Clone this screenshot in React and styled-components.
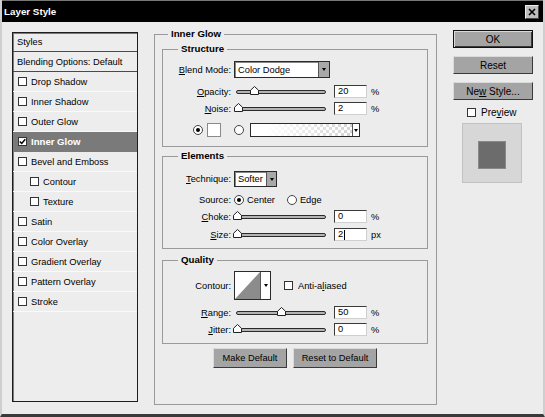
import React from 'react';
import styled, { createGlobalStyle } from 'styled-components';

const Global = createGlobalStyle`
  html, body { margin: 0; padding: 0; background: #ececec; }
  body { font-family: "Liberation Sans", Arial, sans-serif; font-size: 9.3px; color: #000; }
  * { box-sizing: border-box; }
`;

const Window = styled.div`
  width: 545px;
  height: 417px;
  background: #ececec;
  display: flex;
  flex-direction: column;
  border-left: 2px solid #cfcfcf;
  border-right: 2px solid #cfcfcf;
  border-bottom: 3px solid #3a3a3a;
  overflow: hidden;
`;

const TitleBar = styled.div`
  height: 22px;
  flex-shrink: 0;
  background: #000;
  color: #fff;
  font-weight: bold;
  font-size: 9.8px;
  display: flex;
  align-items: center;
  justify-content: space-between;
  padding: 0 4px 0 2px;
  border-top: 1px solid #777;
`;

const CloseBtn = styled.div`
  width: 14px;
  height: 14px;
  background: #bdbdbd;
  border: 1px solid;
  border-color: #eee #444 #444 #eee;
  display: flex;
  align-items: center;
  justify-content: center;
`;

const Body = styled.div`
  display: flex;
  align-items: flex-start;
  padding: 6px 10px 0 10px;
`;

const ListBox = styled.div`
  width: 126px;
  height: 370px;
  margin-top: 4px;
  border: 1px solid #1e1e1e;
  box-shadow: inset 1px 1px 0 #7a7a7a;
  background: #ededed;
  display: flex;
  flex-direction: column;
`;

const ListHead = styled.div`
  height: ${p => p.$h}px;
  flex-shrink: 0;
  border-bottom: 1px solid #4a4a4a;
  display: flex;
  align-items: center;
  padding-left: 4px;
`;

const ListItem = styled.div`
  height: 20px;
  flex-shrink: 0;
  display: flex;
  align-items: center;
  gap: 4px;
  padding-left: ${p => p.$indent}px;
  border-bottom: 1px solid ${p => (p.$active ? '#7a7a7a' : '#fafafa')};
  background: ${p => (p.$active ? '#7a7a7a' : 'transparent')};
  color: ${p => (p.$active ? '#fff' : '#000')};
  font-weight: ${p => (p.$active ? 'bold' : 'normal')};
  font-size: ${p => (p.$active ? '9.6px' : '9.3px')};
`;

const Box = styled.span`
  width: 9px;
  height: 9px;
  flex-shrink: 0;
  background: #fff;
  border: 1px solid #333;
  display: inline-flex;
  align-items: center;
  justify-content: center;
`;

const Main = styled.fieldset`
  margin: 0 0 0 16px;
  padding: 0 8px 0 7px;
  width: 283px;
  height: 377px;
  border: 1px solid #9a9a9a;
  min-width: 0;
  display: flex;
  flex-direction: column;
`;

const Group = styled.fieldset`
  margin: ${p => p.$mt}px 0 0 0;
  padding: 0 0 ${p => p.$pb}px 0;
  border: 1px solid #9a9a9a;
  min-width: 0;
  width: 266px;
`;

const Legend = styled.legend`
  font-weight: bold;
  font-size: 9.7px;
  line-height: 12px;
  padding: 0 3px;
  margin-left: ${p => p.$ml}px;
`;

const Row = styled.div`
  display: flex;
  align-items: center;
  height: ${p => p.$h}px;
  margin-top: ${p => p.$mt}px;
  padding-left: ${p => p.$pl || 0}px;
`;

const Label = styled.span`
  width: 68px;
  margin-right: 3px;
  flex-shrink: 0;
  text-align: right;
  white-space: nowrap;
`;

const U = styled.span`
  text-decoration: underline;
`;

const Select = styled.div`
  width: ${p => p.$w}px;
  height: ${p => p.$h}px;
  background: #fff;
  border: 1px solid #2a2a2a;
  box-shadow: inset 1px 1px 0 #888;
  display: flex;
  align-items: stretch;
`;

const SelectText = styled.span`
  flex: 1;
  padding-left: 3px;
  display: flex;
  align-items: center;
  white-space: nowrap;
  overflow: hidden;
`;

const Arrow = styled.span`
  width: ${p => p.$w || 11}px;
  flex-shrink: 0;
  background: ${p => p.$bg || '#a8a8a8'};
  border-left: 1px solid #555;
  display: flex;
  align-items: center;
  justify-content: center;
  &::after {
    content: '';
    border-left: 2.5px solid transparent;
    border-right: 2.5px solid transparent;
    border-top: 3px solid #000;
  }
`;

const SliderWrap = styled.div`
  position: relative;
  width: 90px;
  height: 13px;
  margin-left: 2px;
  display: flex;
  align-items: center;
`;

const Track = styled.div`
  width: 100%;
  height: 4px;
  margin-top: 1px;
  border: 1px solid #2a2a2a;
  border-radius: 2px;
  background: #b4b4b4;
`;

const Thumb = styled.svg`
  position: absolute;
  top: 1px;
`;

const Field = styled.div`
  width: 33px;
  height: 13px;
  margin-left: 8px;
  background: #fff;
  border: 1px solid;
  border-color: #3a3a3a #cfcfcf #cfcfcf #3a3a3a;
  padding-left: 3px;
  display: flex;
  align-items: center;
  line-height: 11px;
`;

const Caret = styled.span`
  width: 1px;
  height: 10px;
  background: #000;
  margin-left: 1px;
`;

const Unit = styled.span`
  margin-left: 4px;
`;

const Radio = styled.span`
  width: 10px;
  height: 10px;
  flex-shrink: 0;
  border-radius: 50%;
  background: #fff;
  border: 1px solid #444;
  display: inline-flex;
  align-items: center;
  justify-content: center;
  margin-left: ${p => p.$ml || 0}px;
  margin-right: ${p => p.$mr || 0}px;
  &::after {
    content: '';
    display: ${p => (p.$on ? 'block' : 'none')};
    width: 4px;
    height: 4px;
    border-radius: 50%;
    background: #000;
  }
`;

const Swatch = styled.span`
  width: 14px;
  height: 14px;
  margin-left: 4px;
  background: #fff;
  border: 1px solid #8a8a8a;
`;

const Gradient = styled.div`
  width: 110px;
  height: 14px;
  margin-left: 6px;
  border: 1px solid #2a2a2a;
  display: flex;
`;

const GradFill = styled.span`
  flex: 1;
  background:
    linear-gradient(to right, #fff 15%, rgba(255,255,255,0) 100%),
    repeating-conic-gradient(#d4d4d4 0 25%, #fff 0 50%) 0 0 / 6px 6px;
`;

const Contour = styled.div`
  width: 37px;
  height: 29px;
  border: 1px solid #2a2a2a;
  display: flex;
  background: #fff;
`;

const ContourPic = styled.svg`
  flex: 1;
  display: block;
`;

const Check = styled.div`
  display: flex;
  align-items: center;
  gap: 5px;
  margin-left: ${p => p.$ml}px;
`;

const Buttons = styled.div`
  display: flex;
  justify-content: center;
  gap: 6px;
  margin-top: 4px;
`;

const Btn = styled.div`
  width: ${p => p.$w}px;
  height: ${p => p.$h || 20}px;
  background: #a4a4a4;
  border: 1px solid;
  border-color: ${p => (p.$default ? '#111' : '#dadada #3a3a3a #3a3a3a #dadada')};
  box-shadow: ${p => (p.$default ? 'inset 1px 1px 0 #dadada, inset -1px -1px 0 #3a3a3a' : 'none')};
  display: flex;
  align-items: center;
  justify-content: center;
  white-space: nowrap;
  font-size: ${p => p.$fs || 9.3}px;
  margin-top: ${p => p.$mt || 0}px;
`;

const Side = styled.div`
  width: 80px;
  margin: 2px 0 0 16px;
  display: flex;
  flex-direction: column;
`;

const PreviewRow = styled.div`
  display: flex;
  align-items: center;
  gap: 5px;
  height: 12px;
  margin: 6px 0 0 14px;
  font-size: 10px;
`;

const PreviewBox = styled.div`
  width: 60px;
  height: 60px;
  margin: 5px 0 0 9px;
  background: #d7d7d7;
  border: 1px solid #c2c2c2;
  display: flex;
  align-items: center;
  justify-content: center;
  padding-top: 3px;
`;

const PreviewSq = styled.div`
  width: 28px;
  height: 28px;
  background: #6c6c6c;
  border: 1px solid #888;
`;

const Slider = ({ value, max = 100 }) => (
  <SliderWrap>
    <Track />
    <Thumb width="9" height="9" viewBox="0 0 9 9" style={{ left: (value / max) * 88 - 3.5 }}>
      <path d="M4.5 0.5 L8.5 4.3 L8.5 8.5 L0.5 8.5 L0.5 4.3 Z" fill="#fff" stroke="#222" strokeWidth="1" />
    </Thumb>
  </SliderWrap>
);

const Tick = () => (
  <svg width="7" height="7" viewBox="0 0 7 7">
    <path d="M0.8 3.4 L2.7 5.4 L6.3 1.2" fill="none" stroke="#000" strokeWidth="1.5" />
  </svg>
);

const items = [
  { name: 'Drop Shadow', indent: 5 },
  { name: 'Inner Shadow', indent: 5 },
  { name: 'Outer Glow', indent: 5 },
  { name: 'Inner Glow', indent: 5, active: true },
  { name: 'Bevel and Emboss', indent: 5 },
  { name: 'Contour', indent: 17 },
  { name: 'Texture', indent: 17 },
  { name: 'Satin', indent: 5 },
  { name: 'Color Overlay', indent: 5 },
  { name: 'Gradient Overlay', indent: 5 },
  { name: 'Pattern Overlay', indent: 5 },
  { name: 'Stroke', indent: 5 },
];

export default function App() {
  return (
    <>
      <Global />
      <Window>
        <TitleBar>
          <span>Layer Style</span>
          <CloseBtn>
            <svg width="8" height="8" viewBox="0 0 8 8">
              <path d="M1 1 L7 7 M7 1 L1 7" stroke="#000" strokeWidth="1.6" />
            </svg>
          </CloseBtn>
        </TitleBar>
        <Body>
          <ListBox>
            <ListHead $h={19}>Styles</ListHead>
            <ListHead $h={20}>Blending Options: Default</ListHead>
            {items.map(it => (
              <ListItem key={it.name} $indent={it.indent} $active={it.active}>
                <Box>{it.active && <Tick />}</Box>
                <span>{it.name}</span>
              </ListItem>
            ))}
          </ListBox>

          <Main>
            <Legend $ml={6}>Inner Glow</Legend>
            <Group $mt={3} $pb={9}>
              <Legend $ml={15}>Structure</Legend>
              <Row $h={17} $mt={6}>
                <Label><U>B</U>lend Mode:</Label>
                <Select $w={96} $h={17}>
                  <SelectText>Color Dodge</SelectText>
                  <Arrow />
                </Select>
              </Row>
              <Row $h={13} $mt={7}>
                <Label><U>O</U>pacity:</Label>
                <Slider value={20} />
                <Field>20</Field>
                <Unit>%</Unit>
              </Row>
              <Row $h={13} $mt={4}>
                <Label><U>N</U>oise:</Label>
                <Slider value={2} />
                <Field>2</Field>
                <Unit>%</Unit>
              </Row>
              <Row $h={14} $mt={8} $pl={30}>
                <Radio $on />
                <Swatch />
                <Radio $ml={13} />
                <Gradient>
                  <GradFill />
                  <Arrow $w={7} $bg="#fff" />
                </Gradient>
              </Row>
            </Group>

            <Group $mt={3} $pb={7}>
              <Legend $ml={15}>Elements</Legend>
              <Row $h={16} $mt={9}>
                <Label><U>T</U>echnique:</Label>
                <Select $w={43} $h={16}>
                  <SelectText>Softer</SelectText>
                  <Arrow $w={10} />
                </Select>
              </Row>
              <Row $h={12} $mt={7}>
                <Label>Source:</Label>
                <Radio $on $mr={3} />
                <span>Center</span>
                <Radio $ml={12} $mr={3} />
                <span>Edge</span>
              </Row>
              <Row $h={13} $mt={4}>
                <Label><U>C</U>hoke:</Label>
                <Slider value={0} />
                <Field>0</Field>
                <Unit>%</Unit>
              </Row>
              <Row $h={13} $mt={5}>
                <Label><U>S</U>ize:</Label>
                <Slider value={2} max={250} />
                <Field>2<Caret /></Field>
                <Unit>px</Unit>
              </Row>
            </Group>

            <Group $mt={5} $pb={7}>
              <Legend $ml={15}>Quality</Legend>
              <Row $h={29} $mt={5}>
                <Label>Contour:</Label>
                <Contour>
                  <ContourPic viewBox="0 0 26 27" preserveAspectRatio="none">
                    <polygon points="0,27 26,0 26,27" fill="#8c8c8c" />
                  </ContourPic>
                  <Arrow $w={10} $bg="#fff" />
                </Contour>
                <Check $ml={13}>
                  <Box />
                  <span>Anti-a<U>l</U>iased</span>
                </Check>
              </Row>
              <Row $h={13} $mt={6}>
                <Label><U>R</U>ange:</Label>
                <Slider value={50} />
                <Field>50</Field>
                <Unit>%</Unit>
              </Row>
              <Row $h={13} $mt={4}>
                <Label><U>J</U>itter:</Label>
                <Slider value={0} />
                <Field>0</Field>
                <Unit>%</Unit>
              </Row>
            </Group>

            <Buttons>
              <Btn $w={74}>Make Default</Btn>
              <Btn $w={84}>Reset to Default</Btn>
            </Buttons>
          </Main>

          <Side>
            <Btn $w={80} $h={18} $default $fs={10}>OK</Btn>
            <Btn $w={80} $h={18} $mt={8} $fs={10}>Reset</Btn>
            <Btn $w={80} $h={18} $mt={8} $fs={10}>
              <span>Ne<U>w</U> Style...</span>
            </Btn>
            <PreviewRow>
              <Box />
              <span>Pre<U>v</U>iew</span>
            </PreviewRow>
            <PreviewBox>
              <PreviewSq />
            </PreviewBox>
          </Side>
        </Body>
      </Window>
    </>
  );
}
